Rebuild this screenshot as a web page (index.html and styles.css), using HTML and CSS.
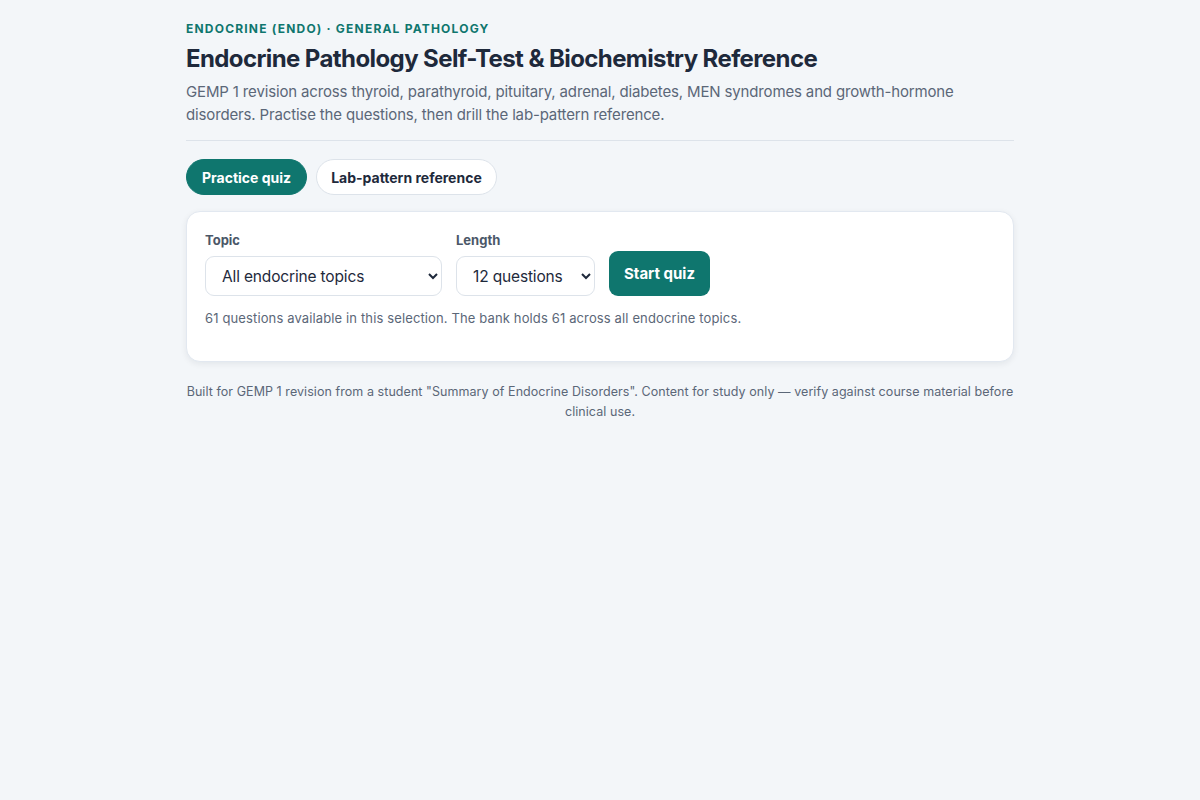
FILE: index.html
```html
<!DOCTYPE html>
<html lang="en">
<head>
  <meta charset="UTF-8">
  <meta name="viewport" content="width=device-width, initial-scale=1.0">
  <title>Endocrine Pathology Self-Test</title>
  <link rel="stylesheet" href="styles.css">
</head>
<body>

  <main class="page">
    <header class="intro">
      <p class="eyebrow">Endocrine (ENDO) · General Pathology</p>
      <h1>Endocrine Pathology Self-Test &amp; Biochemistry Reference</h1>
      <p class="lead">GEMP 1 revision across thyroid, parathyroid, pituitary, adrenal, diabetes, MEN syndromes and growth-hormone disorders. Practise the questions, then drill the lab-pattern reference.</p>
    </header>

    <!-- Tabs -->
    <nav class="tabs">
      <button class="tab active" type="button">Practice quiz</button>
      <button class="tab" type="button">Lab-pattern reference</button>
    </nav>

    <!-- Quiz setup -->
    <section class="card">
      <form class="setup">
        <div class="field">
          <label for="topic">Topic</label>
          <select id="topic" class="topic">
            <option>All endocrine topics</option>
            <option>Thyroid</option>
            <option>Parathyroid</option>
            <option>Pituitary</option>
            <option>Adrenal</option>
            <option>Diabetes</option>
            <option>MEN syndromes</option>
          </select>
        </div>
        <div class="field">
          <label for="length">Length</label>
          <select id="length" class="length">
            <option>12 questions</option>
            <option>24 questions</option>
            <option>All questions</option>
          </select>
        </div>
        <button type="submit" class="start">Start quiz</button>
      </form>
      <p class="note">61 questions available in this selection. The bank holds 61 across all endocrine topics.</p>
    </section>

    <footer class="foot">Built for GEMP 1 revision from a student "Summary of Endocrine Disorders". Content for study only — verify against course material before clinical use.</footer>
  </main>

</body>
</html>
```

FILE: styles.css
```css
body {
  font-family: Inter, "Noto Sans", sans-serif;
  margin: 0;
  padding: 0;
  background-color: #f3f6f9;
  color: #1e293b;
}

.page {
  max-width: 828px;
  margin: 0 auto;
  padding: 21px 0 40px;
}

.eyebrow {
  margin: 0;
  font-size: 12px;
  font-weight: 700;
  letter-spacing: 0.1em;
  text-transform: uppercase;
  color: #0f766e;
  line-height: 16px;
}

h1 {
  margin: 6px 0 0;
  font-size: 24px;
  line-height: 32px;
  font-weight: 700;
  letter-spacing: -0.025em;
  color: #1e293b;
}

.lead {
  margin: 5px 0 0;
  font-size: 15px;
  line-height: 23px;
  letter-spacing: -0.01em;
  color: #5b6778;
}

.intro {
  padding-bottom: 14px;
  border-bottom: 1px solid #dde3ea;
}

.tabs {
  display: flex;
  gap: 9px;
  margin-top: 18px;
}

.tab {
  font-family: inherit;
  font-size: 14px;
  font-weight: 700;
  height: 36px;
  padding: 0 14px;
  border-radius: 18px;
  border: 1px solid #dde3ea;
  background-color: white;
  color: #1e293b;
  cursor: pointer;
}

.tab.active {
  padding: 0 15px;
  background-color: #0f766e;
  border-color: #0f766e;
  color: white;
}

.card {
  background-color: white;
  margin-top: 16px;
  padding: 19px 18px 34px;
  border: 1px solid #e2e8f0;
  border-radius: 14px;
  box-shadow: 0 2px 6px rgba(15, 23, 42, 0.07);
}

.setup {
  display: flex;
  align-items: flex-end;
  gap: 14px;
}

.field label {
  display: block;
  font-size: 13px;
  font-weight: 700;
  color: #4b5768;
  margin-bottom: 7px;
  line-height: 18px;
}

select {
  font-family: inherit;
  font-size: 15.5px;
  letter-spacing: -0.01em;
  height: 40px;
  padding: 0 8px 0 12px;
  border: 1px solid #dde3ea;
  border-radius: 9px;
  background-color: white;
  color: #1e293b;
}

.topic {
  width: 237px;
}

.length {
  width: 139px;
}

.start {
  font-family: inherit;
  font-size: 15px;
  font-weight: 700;
  height: 45px;
  padding: 0 15px;
  border: none;
  border-radius: 9px;
  background-color: #0f766e;
  color: white;
  cursor: pointer;
}

.note {
  margin: 13px 0 0;
  font-size: 13px;
  line-height: 18px;
  letter-spacing: 0.01em;
  color: #5b6778;
}

.foot {
  margin-top: 20px;
  text-align: center;
  font-size: 12.5px;
  line-height: 20px;
  letter-spacing: 0.005em;
  color: #5b6778;
}
```
